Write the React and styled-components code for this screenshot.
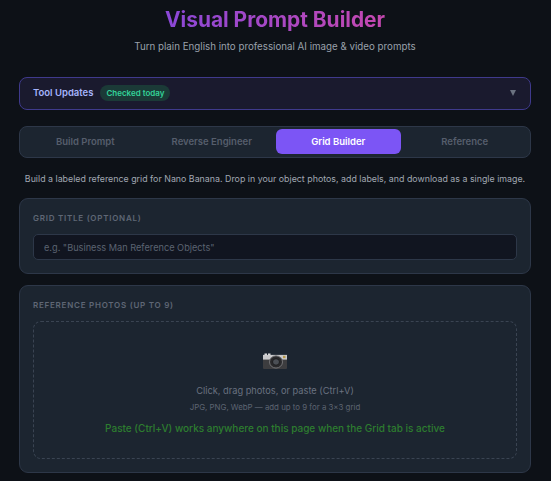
import React from "react";
import styled, { createGlobalStyle } from "styled-components";

const GlobalStyle = createGlobalStyle`
  * { box-sizing: border-box; }
  html, body { margin: 0; padding: 0; background: #0d1117; overflow: hidden; }
  body { font-family: Inter, "Liberation Sans", sans-serif; }
`;

const Page = styled.div`
  width: 551px;
  height: 481px;
  padding: 0 20px 0 19px;
  overflow: hidden;
`;

const Header = styled.header`
  text-align: center;
  padding-top: 7px;
  height: 77px;
`;

const Title = styled.h1`
  margin: 0;
  display: inline-block;
  font-size: 20.9px;
  line-height: 26px;
  font-weight: 700;
  background: linear-gradient(90deg, #8b48d8, #c548b0);
  -webkit-background-clip: text;
  background-clip: text;
  color: transparent;
`;

const Subtitle = styled.p`
  margin: 7px 0 0;
  font-size: 9.75px;
  line-height: 14px;
  color: #9aa1ab;
`;

const Updates = styled.div`
  height: 33px;
  border: 1.5px solid #3f3a8c;
  border-radius: 8px;
  background: #1a1a2e;
  display: flex;
  align-items: center;
  padding: 0 14px 2px 13px;
  gap: 7px;
`;

const UpdatesLabel = styled.span`
  font-size: 9.5px;
  font-weight: 600;
  color: #a5b4fc;
`;

const Badge = styled.span`
  font-size: 8px;
  font-weight: 600;
  line-height: 16px;
  padding: 0 6px;
  border-radius: 8px;
  background: #1b3a37;
  color: #34d399;
`;

const Caret = styled.span`
  margin-left: auto;
  width: 0;
  height: 0;
  border-left: 3.5px solid transparent;
  border-right: 3.5px solid transparent;
  border-top: 6px solid #6b7280;
`;

const Tabs = styled.nav`
  margin-top: 16px;
  height: 32px;
  padding: 2px 3px 3px;
  display: grid;
  grid-template-columns: repeat(4, 1fr);
  gap: 2px;
  background: #1c2530;
  border: 1px solid #2d3748;
  border-radius: 8px;
`;

const Tab = styled.div`
  display: flex;
  align-items: center;
  justify-content: center;
  border-radius: 6px;
  font-size: 9.5px;
  font-weight: 600;
  color: ${(p) => (p.$active ? "#ffffff" : "#565e6c")};
  background: ${(p) => (p.$active ? "#7c55f5" : "transparent")};
`;

const Intro = styled.p`
  margin: 15px 0 13px;
  font-size: 8.85px;
  line-height: 12px;
  text-align: center;
  color: #a0a7b2;
  white-space: nowrap;
`;

const Card = styled.section`
  background: #1c2530;
  border: 1px solid #2d3748;
  border-radius: 9px;
  padding: 13px;
  margin-bottom: 11px;
`;

const Label = styled.div`
  font-size: 8px;
  line-height: 12px;
  font-weight: 600;
  letter-spacing: 0.75px;
  text-transform: uppercase;
  color: #5f6775;
  margin-bottom: 10px;
`;

const Input = styled.input`
  display: block;
  width: 100%;
  height: 26px;
  padding: 0 10px;
  border: 1px solid #2d3748;
  border-radius: 5px;
  background: #111520;
  font-family: inherit;
  font-size: 9.2px;
  color: #c9d1d9;
  &::placeholder { color: #5b6371; opacity: 1; }
`;

const DropZone = styled.div`
  height: 138px;
  border: 1px dashed #3a4452;
  border-radius: 8px;
  display: flex;
  flex-direction: column;
  align-items: center;
  padding-top: 31px;
`;

const DropMain = styled.div`
  margin-top: 15px;
  font-size: 9.25px;
  line-height: 13px;
  color: #6a7280;
`;

const DropHint = styled.div`
  margin-top: 5px;
  font-size: 7.87px;
  line-height: 10px;
  color: #5c6470;
`;

const DropPaste = styled.div`
  margin-top: 10px;
  font-size: 10px;
  line-height: 13px;
  font-weight: 500;
  color: #2d7d2f;
`;

function CameraIcon() {
  return (
    <svg width="24" height="16" viewBox="0 0 24 17" preserveAspectRatio="none">
      <rect x="0" y="2" width="24" height="15" rx="1" fill="#3d3d3f" />
      <rect x="0" y="2" width="24" height="5" fill="#c9c9cb" />
      <rect x="1.5" y="0.5" width="2.5" height="2" fill="#d9d9db" />
      <rect x="5" y="0.5" width="2.5" height="2" fill="#d9d9db" />
      <rect x="20" y="3" width="2.5" height="2.5" fill="#b89a4a" />
      <circle cx="13" cy="9.5" r="6.5" fill="#2a2a2c" stroke="#77777a" strokeWidth="1" />
      <circle cx="13" cy="9.5" r="3.5" fill="#4b4f55" stroke="#1c1c1e" strokeWidth="1" />
    </svg>
  );
}

export default function App() {
  return (
    <Page>
      <GlobalStyle />
      <Header>
        <Title>Visual Prompt Builder</Title>
        <Subtitle>Turn plain English into professional AI image &amp; video prompts</Subtitle>
      </Header>
      <Updates>
        <UpdatesLabel>Tool Updates</UpdatesLabel>
        <Badge>Checked today</Badge>
        <Caret />
      </Updates>
      <Tabs>
        <Tab>Build Prompt</Tab>
        <Tab>Reverse Engineer</Tab>
        <Tab $active>Grid Builder</Tab>
        <Tab>Reference</Tab>
      </Tabs>
      <Intro>Build a labeled reference grid for Nano Banana. Drop in your object photos, add labels, and download as a single image.</Intro>
      <Card>
        <Label>Grid Title (optional)</Label>
        <Input placeholder='e.g. "Business Man Reference Objects"' />
      </Card>
      <Card>
        <Label>Reference Photos (up to 9)</Label>
        <DropZone>
          <CameraIcon />
          <DropMain>Click, drag photos, or paste (Ctrl+V)</DropMain>
          <DropHint>JPG, PNG, WebP — add up to 9 for a 3×3 grid</DropHint>
          <DropPaste>Paste (Ctrl+V) works anywhere on this page when the Grid tab is active</DropPaste>
        </DropZone>
      </Card>
    </Page>
  );
}
